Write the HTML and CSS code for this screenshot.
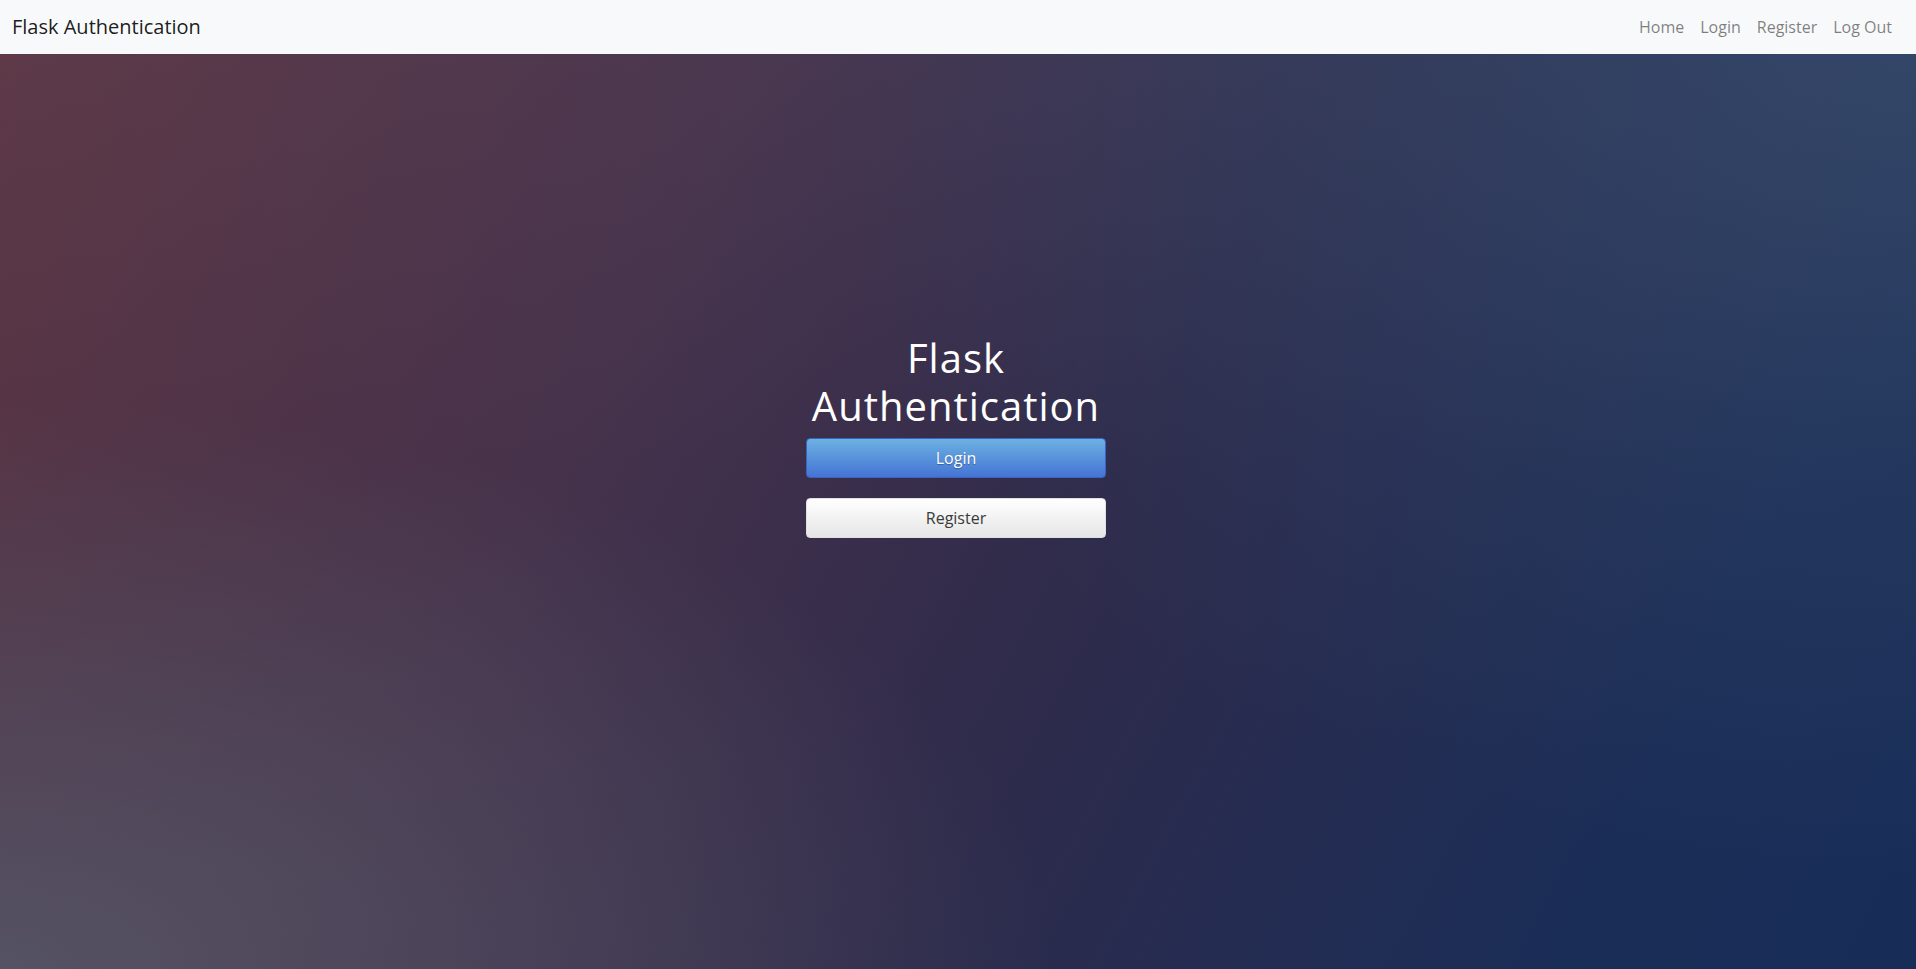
FILE: index.html
```html
<!DOCTYPE html>
<html lang="en">
<head>
    <meta charset="UTF-8">
    <meta name="viewport" content="width=device-width, initial-scale=1.0">
    <title>Flask Authentication</title>
    <link rel="stylesheet" href="styles.css">
</head>
<body>
    <nav class="navbar">
        <a class="brand" href="#">Flask Authentication</a>
        <div class="nav-links">
            <a href="#">Home</a>
            <a href="#">Login</a>
            <a href="#">Register</a>
            <a href="#">Log Out</a>
        </div>
    </nav>

    <main class="hero">
        <div class="box">
            <h1>Flask Authentication</h1>
            <a class="btn btn-primary" href="#">Login</a>
            <a class="btn btn-light" href="#">Register</a>
        </div>
    </main>
</body>
</html>
```

FILE: styles.css
```css
html, body {
    height: 100%;
}
body {
    margin: 0;
    font-family: "Open Sans", "Liberation Sans", sans-serif;
    display: flex;
    flex-direction: column;
    overflow: hidden;
}
a {
    text-decoration: none;
}
.navbar {
    height: 54px;
    flex-shrink: 0;
    display: flex;
    align-items: center;
    justify-content: space-between;
    padding: 0 16px 0 12px;
    background-color: #f8f9fa;
}
.brand {
    font-size: 20px;
    line-height: 30px;
    color: rgba(0, 0, 0, 0.9);
}
.nav-links {
    display: flex;
}
.nav-links a {
    padding: 0 8px;
    font-size: 16px;
    line-height: 24px;
    color: rgba(0, 0, 0, 0.5);
}
.hero {
    flex: 1;
    display: flex;
    justify-content: center;
    align-items: center;
    padding: 0 4px 151px 0;
    background-color: #2f2a4a;
    background-image:
        linear-gradient(to bottom, rgba(120, 120, 140, 0.08) 0%, rgba(120, 120, 140, 0) 45%),
        radial-gradient(ellipse 55% 62% at 0% 100%, rgba(84, 82, 99, 1) 0%, rgba(84, 82, 99, 0) 100%),
        radial-gradient(ellipse 58% 90% at 100% 0%, rgba(48, 68, 102, 0.9) 0%, rgba(48, 68, 102, 0) 100%),
        linear-gradient(118deg, #5b3442 0%, #46324b 32%, #2f2b4b 56%, #1a2d57 85%, #172d58 100%);
}
.box {
    width: 300px;
    display: flex;
    flex-direction: column;
}
.box h1 {
    margin: 0 0 8px;
    font-size: 40px;
    font-weight: 400;
    line-height: 1.2;
    letter-spacing: 1px;
    color: #fff;
    text-align: center;
}
.btn {
    display: block;
    box-sizing: border-box;
    height: 40px;
    line-height: 38px;
    font-size: 16px;
    text-align: center;
    border-radius: 4px;
    border: 1px solid transparent;
}
.btn-primary {
    color: #fff;
    text-shadow: 0 1px 1px rgba(0, 0, 0, 0.3);
    background: linear-gradient(to bottom, #6cb1e1, #4574d5);
    border-color: #3b63c2;
}
.btn-light {
    margin-top: 20px;
    color: #3a3a3a;
    background: linear-gradient(to bottom, #ffffff, #e6e6e6);
    border-color: #e0e0e0;
}
```
